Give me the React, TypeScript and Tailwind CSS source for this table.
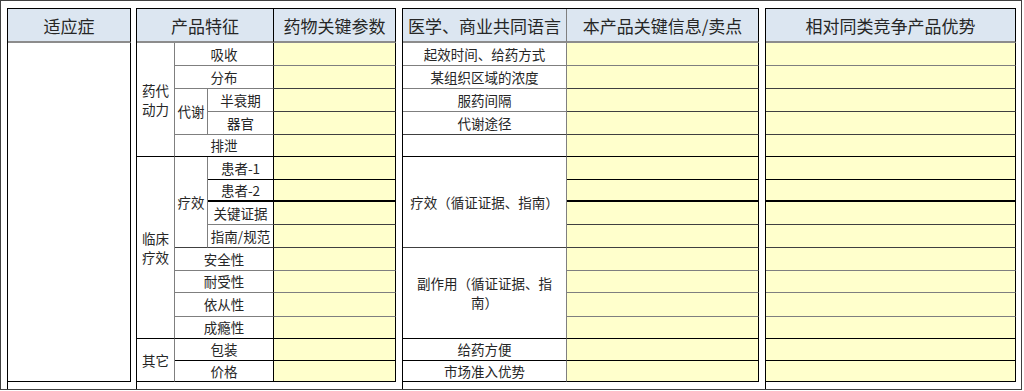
import clsx from 'clsx';
import type { ReactNode } from 'react';

const ROWS = [
  'row-start-2', 'row-start-3', 'row-start-4', 'row-start-5', 'row-start-6',
  'row-start-7', 'row-start-8', 'row-start-9', 'row-start-10', 'row-start-11',
  'row-start-12', 'row-start-13', 'row-start-14', 'row-start-15', 'row-start-16',
];

// bottom line of each row in the yellow columns
const YB = [
  'border-b-[#7f7f7f]', 'border-b-[#404040]', 'border-b-[#404040]', 'border-b-[#404040]', 'border-b-black',
  'border-b-black', 'border-b-2 border-b-black', 'border-b-[#404040]', 'border-b-[#404040]', 'border-b-[#7f7f7f]',
  'border-b-[#7f7f7f]', 'border-b-[#7f7f7f]', 'border-b-black', 'border-b-black', 'border-b-black',
];

const TABLE =
  'grid border-l border-t border-l-black border-t-black grid-rows-[34px_23px_23px_23px_23px_22px_23px_22px_23px_23px_23px_22px_24px_22px_22px_21px]';

function H({ className, children }: { className?: string; children?: ReactNode }) {
  return (
    <div
      className={clsx(
        'flex items-center justify-center whitespace-nowrap border-b-2 border-r border-b-[#8c8c8c] bg-[#dce6f1] text-[17px] leading-none',
        className,
      )}
    >
      {children}
    </div>
  );
}

function W({ className, children }: { className?: string; children?: ReactNode }) {
  return (
    <div
      className={clsx(
        'flex items-center justify-center whitespace-nowrap border-b border-r bg-white text-center text-[13.5px] leading-[19px]',
        className,
      )}
    >
      {children}
    </div>
  );
}

function Y({ className }: { className?: string }) {
  return <div className={clsx('border-b border-r border-r-black bg-[#ffffcc]', className)} />;
}

export default function App() {
  return (
    <div className="h-[391px] w-[1024px] bg-white font-['Noto_Sans_CJK_SC',sans-serif] text-[#262626]">
      <div className="flex h-[390px] w-[1022px] gap-[5px] border border-[#404040] pl-[6px] pt-[7px]">
        {/* 适应症 */}
        <div className={clsx(TABLE, 'w-[124px] grid-cols-[123px]')}>
          <H className="border-r-black">适应症</H>
          <W className="row-span-15 row-start-2 border-r-black border-b-black" />
        </div>

        {/* 产品特征 / 药物关键参数 */}
        <div className={clsx(TABLE, 'w-[260px] grid-cols-[38px_33px_66px_122px]')}>
          <H className="col-span-3 border-r-black">产品特征</H>
          <H className="border-r-black">药物关键参数</H>

          <W className="col-start-1 row-span-5 row-start-2 border-r-[#7f7f7f] border-b-black">
            药代
            <br />
            动力
          </W>
          <W className="col-span-2 col-start-2 row-start-2 border-r-black border-b-[#7f7f7f]">吸收</W>
          <W className="col-span-2 col-start-2 row-start-3 border-r-black border-b-[#7f7f7f]">分布</W>
          <W className="col-start-2 row-span-2 row-start-4 border-r-[#7f7f7f] border-b-[#7f7f7f]">代谢</W>
          <W className="col-start-3 row-start-4 border-r-black border-b-[#7f7f7f]">半衰期</W>
          <W className="col-start-3 row-start-5 border-r-black border-b-[#7f7f7f]">器官</W>
          <W className="col-span-2 col-start-2 row-start-6 border-r-black border-b-black">排泄</W>

          <W className="col-start-1 row-span-8 row-start-7 border-r-[#7f7f7f] border-b-black">
            临床
            <br />
            疗效
          </W>
          <W className="col-start-2 row-span-4 row-start-7 border-r-[#7f7f7f] border-b-[#404040]">疗效</W>
          <W className="col-start-3 row-start-7 border-r-black border-b-black">患者-1</W>
          <W className="col-start-3 row-start-8 border-b-2 border-r-black border-b-black">患者-2</W>
          <W className="col-start-3 row-start-9 border-r-black border-b-[#7f7f7f]">关键证据</W>
          <W className="col-start-3 row-start-10 border-r-black border-b-[#404040]">指南/规范</W>
          <W className="col-span-2 col-start-2 row-start-11 border-r-black border-b-[#7f7f7f]">安全性</W>
          <W className="col-span-2 col-start-2 row-start-12 border-r-black border-b-[#7f7f7f]">耐受性</W>
          <W className="col-span-2 col-start-2 row-start-13 border-r-black border-b-[#7f7f7f]">依从性</W>
          <W className="col-span-2 col-start-2 row-start-14 border-r-black border-b-black">成瘾性</W>

          <W className="col-start-1 row-span-2 row-start-15 border-r-[#7f7f7f] border-b-black">其它</W>
          <W className="col-span-2 col-start-2 row-start-15 border-r-black border-b-black">包装</W>
          <W className="col-span-2 col-start-2 row-start-16 border-r-black border-b-black">价格</W>

          {ROWS.map((r, i) => (
            <Y key={r} className={clsx('col-start-4', r, YB[i])} />
          ))}
        </div>

        {/* 医学、商业共同语言 / 本产品关键信息 */}
        <div className={clsx(TABLE, 'ml-px w-[357px] grid-cols-[164px_192px]')}>
          <H className="border-r-[#7f7f7f]">医学、商业共同语言</H>
          <H className="border-r-black">本产品关键信息/卖点</H>

          <W className="col-start-1 row-start-2 border-r-[#7f7f7f] border-b-[#7f7f7f]">起效时间、给药方式</W>
          <W className="col-start-1 row-start-3 border-r-[#7f7f7f] border-b-[#7f7f7f]">某组织区域的浓度</W>
          <W className="col-start-1 row-start-4 border-r-[#7f7f7f] border-b-[#7f7f7f]">服药间隔</W>
          <W className="col-start-1 row-start-5 border-r-[#7f7f7f] border-b-[#404040]">代谢途径</W>
          <W className="col-start-1 row-start-6 border-r-[#7f7f7f] border-b-black" />
          <W className="col-start-1 row-span-4 row-start-7 border-r-[#7f7f7f] border-b-[#404040]">
            疗效（循证证据、指南）
          </W>
          <W className="col-start-1 row-span-4 row-start-11 border-r-[#7f7f7f] border-b-black">
            副作用（循证证据、指
            <br />
            南）
          </W>
          <W className="col-start-1 row-start-15 border-r-[#7f7f7f] border-b-black">给药方便</W>
          <W className="col-start-1 row-start-16 border-r-[#7f7f7f] border-b-black">市场准入优势</W>

          {ROWS.map((r, i) => (
            <Y key={r} className={clsx('col-start-2', r, YB[i])} />
          ))}
        </div>

        {/* 相对同类竞争产品优势 */}
        <div className={clsx(TABLE, 'ml-px w-[251px] grid-cols-[250px]')}>
          <H className="border-r-black">相对同类竞争产品优势</H>
          {ROWS.map((r, i) => (
            <Y key={r} className={clsx('col-start-1', r, YB[i])} />
          ))}
        </div>
      </div>
    </div>
  );
}
